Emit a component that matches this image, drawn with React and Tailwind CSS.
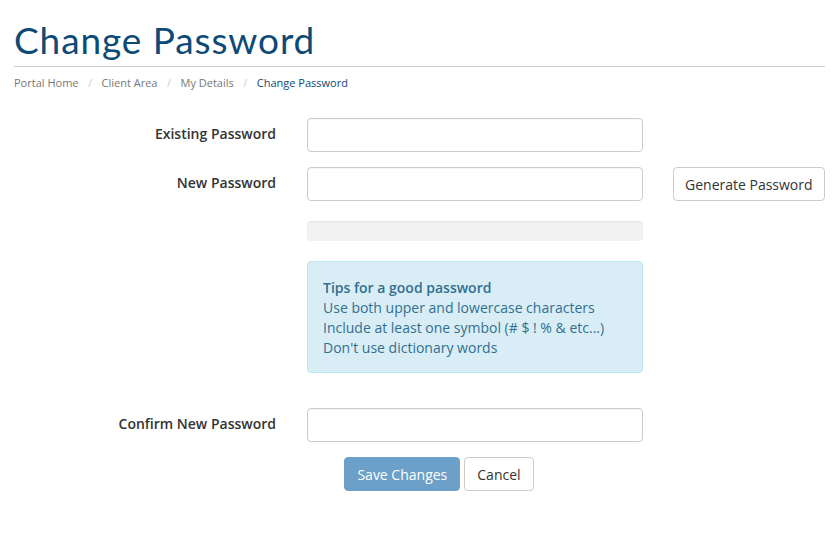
import React from "react";

const font = { fontFamily: '"Open Sans", "Liberation Sans", sans-serif' };

const Row = ({ label, children, extra }) => (
  <div className="flex items-center">
    <label className="w-[262px] shrink-0 pb-[3px] text-right text-[14px] font-semibold text-[#333]">{label}</label>
    <div className="ml-[31px] w-[336px] shrink-0">{children}</div>
    {extra}
  </div>
);

const Input = () => (
  <input
    type="password"
    className="block h-[34px] w-full rounded-[4px] border border-[#ccc] bg-white px-3 text-[14px] shadow-[inset_0_1px_1px_rgba(0,0,0,0.04)] outline-none"
  />
);

export default function App() {
  return (
    <div className="min-h-screen bg-white px-[14px] text-[#333]" style={font}>
      {/* Header */}
      <h1
        className="pt-[18px] text-[37px] leading-[44px] tracking-[0.9px] text-[#0d4a76]"
        style={{ fontFamily: '"Lato", "Open Sans", sans-serif' }}
      >
        Change Password
      </h1>
      <div className="mt-[4px] border-b border-[#cfcfcf]" />
      <nav className="mt-[7px] flex items-center text-[11px] leading-[18px] text-[#777]">
        <span>Portal Home</span>
        <span className="px-[9.5px] text-[#ccc]">/</span>
        <span>Client Area</span>
        <span className="px-[9.5px] text-[#ccc]">/</span>
        <span>My Details</span>
        <span className="px-[9.5px] text-[#ccc]">/</span>
        <span className="text-[#0d4a76]">Change Password</span>
      </nav>

      {/* Form */}
      <form className="mt-[26px] flex flex-col">
        <Row label="Existing Password">
          <Input />
        </Row>
        <div className="mt-[15px]">
          <Row
            label="New Password"
            extra={
              <button
                type="button"
                className="ml-[30px] h-[34px] shrink-0 whitespace-nowrap rounded-[4px] border border-[#ccc] bg-white px-[11px] text-[14px] text-[#333]"
              >
                Generate Password
              </button>
            }
          >
            <Input />
          </Row>
        </div>
        <div className="mt-[20px] ml-[293px] h-[20px] w-[336px] rounded-[4px] bg-[#f2f2f2] shadow-[inset_0_1px_2px_rgba(0,0,0,0.06)]" />
        <div className="mt-[20px] ml-[293px] w-[336px] rounded-[4px] border border-[#bce8f1] bg-[#d9edf7] px-[15px] pt-[16px] pb-[14px] text-[14px] leading-[20px] text-[#31708f]">
          <strong className="font-semibold">Tips for a good password</strong>
          <div>Use both upper and lowercase characters</div>
          <div>Include at least one symbol (# $ ! % &amp; etc...)</div>
          <div>Don't use dictionary words</div>
        </div>
        <div className="mt-[35px]">
          <Row label="Confirm New Password">
            <Input />
          </Row>
        </div>
        <div className="mt-[15px] flex justify-center gap-[4px] pl-[39px]">
          <button
            type="button"
            className="h-[34px] rounded-[4px] border border-[#6aa0c9] bg-[#6ca0c8] px-[12px] text-[14px] text-white"
          >
            Save Changes
          </button>
          <button
            type="button"
            className="h-[34px] rounded-[4px] border border-[#ccc] bg-white px-[12px] text-[14px] text-[#333]"
          >
            Cancel
          </button>
        </div>
      </form>
    </div>
  );
}
